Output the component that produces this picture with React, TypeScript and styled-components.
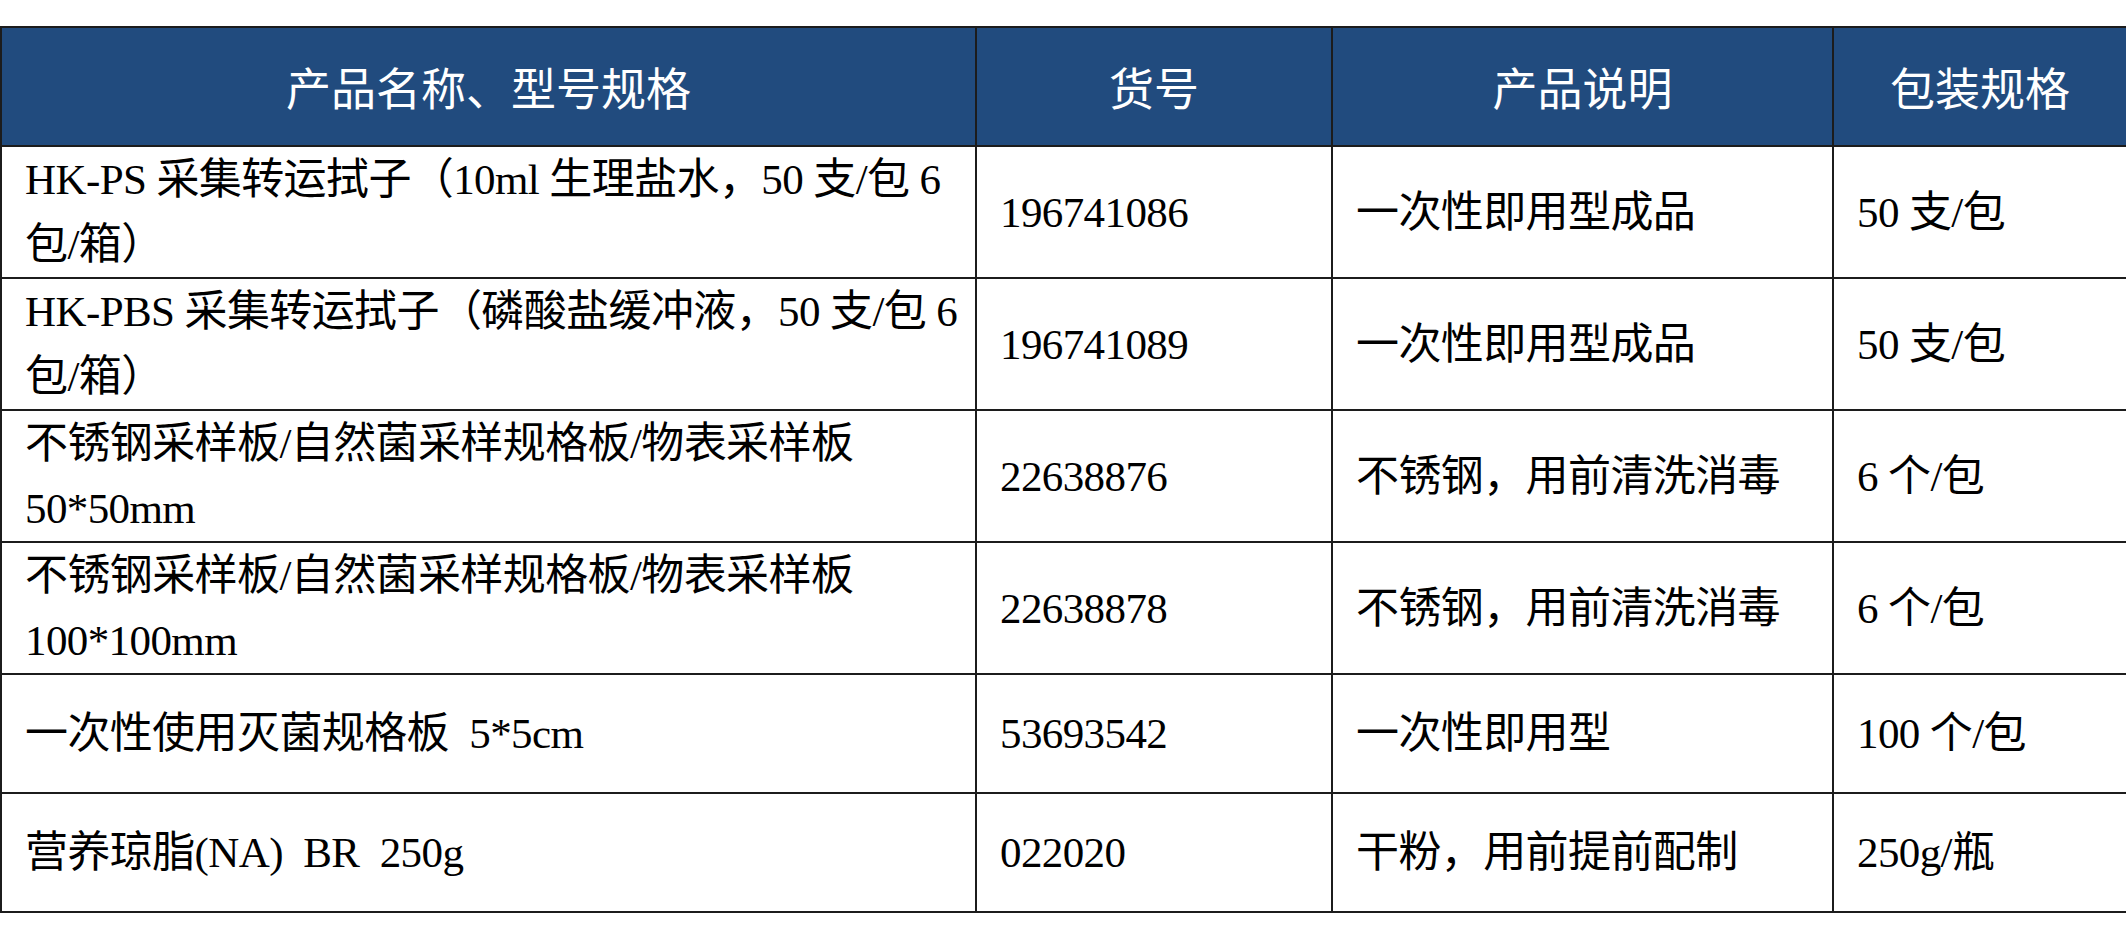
import React from 'react';
import styled, { createGlobalStyle } from 'styled-components';

const GlobalStyle = createGlobalStyle`
    html, body {
        margin: 0;
        padding: 0;
        background: #ffffff;
    }
`;

type Row = {
    name: string[];
    code: string;
    desc: string;
    pack: string;
    tall?: boolean;
};

const rows: Row[] = [
    {
        name: ['HK-PS 采集转运拭子（10ml 生理盐水，50 支/包 6', '包/箱）'],
        code: '196741086',
        desc: '一次性即用型成品',
        pack: '50 支/包',
        tall: true,
    },
    {
        name: ['HK-PBS 采集转运拭子（磷酸盐缓冲液，50 支/包 6', '包/箱）'],
        code: '196741089',
        desc: '一次性即用型成品',
        pack: '50 支/包',
        tall: true,
    },
    {
        name: ['不锈钢采样板/自然菌采样规格板/物表采样板', '50*50mm'],
        code: '22638876',
        desc: '不锈钢，用前清洗消毒',
        pack: '6 个/包',
        tall: true,
    },
    {
        name: ['不锈钢采样板/自然菌采样规格板/物表采样板', '100*100mm'],
        code: '22638878',
        desc: '不锈钢，用前清洗消毒',
        pack: '6 个/包',
        tall: true,
    },
    {
        name: ['一次性使用灭菌规格板\u00a0 5*5cm'],
        code: '53693542',
        desc: '一次性即用型',
        pack: '100 个/包',
    },
    {
        name: ['营养琼脂(NA)\u00a0 BR\u00a0 250g'],
        code: '022020',
        desc: '干粉，用前提前配制',
        pack: '250g/瓶',
    },
];

export default function App() {
    return (
        <>
            <GlobalStyle />
            <Page>
                <Table>
                    <colgroup>
                        <col style={{ width: 975 }} />
                        <col style={{ width: 356 }} />
                        <col style={{ width: 501 }} />
                        <col style={{ width: 294 }} />
                    </colgroup>
                    <thead>
                        <tr>
                            <HeadCell>产品名称、型号规格</HeadCell>
                            <HeadCell>货号</HeadCell>
                            <HeadCell>产品说明</HeadCell>
                            <HeadCell>包装规格</HeadCell>
                        </tr>
                    </thead>
                    <tbody>
                        {rows.map((row, i) => (
                            <BodyRow key={i} $tall={row.tall}>
                                <Cell>
                                    {row.name.map((line, j) => (
                                        <Line key={j}>{line}</Line>
                                    ))}
                                </Cell>
                                <Cell>{row.code}</Cell>
                                <Cell>{row.desc}</Cell>
                                <Cell>{row.pack}</Cell>
                            </BodyRow>
                        ))}
                    </tbody>
                </Table>
            </Page>
        </>
    );
}

const Page = styled.div`
    width: 2126px;
    height: 944px;
    padding-top: 26px;
    box-sizing: border-box;
    overflow: hidden;
`;

const Table = styled.table`
    width: 2126px;
    table-layout: fixed;
    border-collapse: collapse;
    font-family: "Liberation Serif", "Noto Sans CJK SC", serif;
`;

const HeadCell = styled.th`
    height: 117px;
    padding: 0;
    background-color: #214b7e;
    border: 2px solid #1c1c1c;
    color: #ffffff;
    font-family: "Noto Sans CJK SC", sans-serif;
    font-size: 45px;
    font-weight: 400;
    text-align: center;
    vertical-align: middle;
`;

const BodyRow = styled.tr<{ $tall?: boolean }>`
    height: ${(p) => (p.$tall ? '131px' : '119px')};
`;

const Cell = styled.td`
    padding: 0 0 0 23px;
    border: 2px solid #1c1c1c;
    color: #000000;
    font-size: 43px;
    line-height: 65px;
    letter-spacing: -0.6px;
    vertical-align: middle;
    white-space: nowrap;
    overflow: hidden;
`;

const Line = styled.div`
    white-space: nowrap;
`;
